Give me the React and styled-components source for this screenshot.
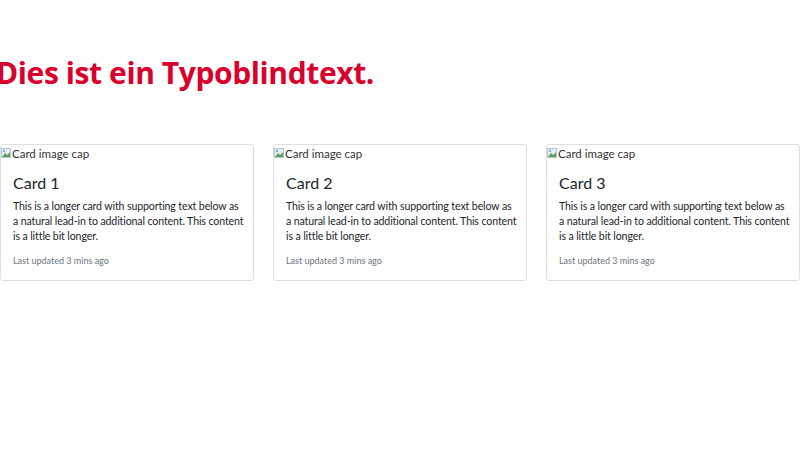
import React from 'react';
import styled, { createGlobalStyle } from 'styled-components';

const GlobalStyle = createGlobalStyle`
  body {
    margin: 0;
    background: #fff;
    font-family: "Lato", "Noto Sans", sans-serif;
    color: #212529;
    overflow: hidden;
  }
`;

const Page = styled.div`
  width: 800px;
  height: 450px;
  padding-top: 51px;
  box-sizing: border-box;
`;

const Heading = styled.h1`
  margin: 0 0 0 -4px;
  font-family: "Open Sans", "Noto Sans", sans-serif;
  font-size: 30px;
  line-height: 44px;
  font-weight: 700;
  color: #d9002c;
  letter-spacing: -0.4px;
`;

const Deck = styled.div`
  display: flex;
  gap: 19px;
  margin-top: 49px;
`;

const Card = styled.div`
  flex: 1;
  border: 1px solid #dfdfdf;
  border-radius: 3px;
  background: #fff;
  display: flex;
  flex-direction: column;
`;

const ImageCap = styled.div`
  display: flex;
  align-items: center;
  height: 16px;
  font-size: 11.5px;
  color: #333;
  gap: 1px;
`;

const Body = styled.div`
  padding: 12px 8px 13px 12px;
`;

const Title = styled.h5`
  margin: 0 0 6px;
  font-size: 16px;
  line-height: 20px;
  font-weight: 400;
`;

const Text = styled.p`
  margin: 0 0 11px;
  font-size: 10.6px;
  line-height: 15px;
  letter-spacing: -0.12px;
`;

const Muted = styled.small`
  display: block;
  font-size: 9px;
  line-height: 12px;
  color: #6c757d;
`;

const BrokenImage = () => (
  <svg width="10" height="10" viewBox="0 0 10 10">
    <rect x="0.5" y="0.5" width="9" height="9" fill="#e8eef3" stroke="#b8c4cc" />
    <path d="M1 9 L4 5 L6 7 L9 4 L9 9 Z" fill="#5aa05a" />
    <circle cx="3" cy="3" r="1.2" fill="#7fb0d8" />
  </svg>
);

const cards = [1, 2, 3];

const App = () => (
  <Page>
    <GlobalStyle />
    <Heading>Dies ist ein Typoblindtext.</Heading>
    <Deck>
      {cards.map((n) => (
        <Card key={n}>
          <ImageCap>
            <BrokenImage />
            Card image cap
          </ImageCap>
          <Body>
            <Title>Card {n}</Title>
            <Text>
              This is a longer card with supporting text below as a natural lead-in to additional
              content. This content is a little bit longer.
            </Text>
            <Muted>Last updated 3 mins ago</Muted>
          </Body>
        </Card>
      ))}
    </Deck>
  </Page>
);

export default App;
